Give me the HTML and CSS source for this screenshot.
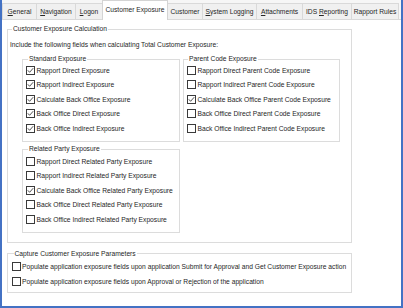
FILE: index.html
```html
<!DOCTYPE html>
<html>
<head>
<meta charset="utf-8">
<link rel="stylesheet" href="styles.css">
</head>
<body>
<div class="frame">
  <div class="tabs">
    <div class="tab w-general"><span><u>G</u>eneral</span></div>
    <div class="tab w-nav"><span><u>N</u>avigation</span></div>
    <div class="tab w-logon"><span><u>L</u>ogon</span></div>
    <div class="tab w-cexp selected"><span>Customer Exposure</span></div>
    <div class="tab w-cust"><span>Customer</span></div>
    <div class="tab w-syslog"><span><u>S</u>ystem Logging</span></div>
    <div class="tab w-attach"><span><u>A</u>ttachments</span></div>
    <div class="tab w-ids"><span>IDS <u>R</u>eporting</span></div>
    <div class="tab w-rules"><span>Rapport Rules</span></div>
  </div>
  <div class="page">
    <fieldset class="group main">
      <legend>Customer Exposure Calculation</legend>
      <div class="intro">Include the following fields when calculating Total Customer Exposure:</div>
      <div class="cols">
        <fieldset class="group sub std">
          <legend>Standard Exposure</legend>
          <div class="row"><span class="cb checked"><svg viewBox="0 0 9 9"><polyline points="1.8,4.3 3.6,6.3 7.2,2.2"/></svg></span><span>Rapport Direct Exposure</span></div>
          <div class="row"><span class="cb checked"><svg viewBox="0 0 9 9"><polyline points="1.8,4.3 3.6,6.3 7.2,2.2"/></svg></span><span>Rapport Indirect Exposure</span></div>
          <div class="row"><span class="cb checked"><svg viewBox="0 0 9 9"><polyline points="1.8,4.3 3.6,6.3 7.2,2.2"/></svg></span><span>Calculate Back Office Exposure</span></div>
          <div class="row"><span class="cb checked"><svg viewBox="0 0 9 9"><polyline points="1.8,4.3 3.6,6.3 7.2,2.2"/></svg></span><span>Back Office Direct Exposure</span></div>
          <div class="row"><span class="cb checked"><svg viewBox="0 0 9 9"><polyline points="1.8,4.3 3.6,6.3 7.2,2.2"/></svg></span><span>Back Office Indirect Exposure</span></div>
        </fieldset>
        <fieldset class="group sub parent">
          <legend>Parent Code Exposure</legend>
          <div class="row"><span class="cb"></span><span>Rapport Direct Parent Code Exposure</span></div>
          <div class="row"><span class="cb"></span><span>Rapport Indirect Parent Code Exposure</span></div>
          <div class="row"><span class="cb checked"><svg viewBox="0 0 9 9"><polyline points="1.8,4.3 3.6,6.3 7.2,2.2"/></svg></span><span>Calculate Back Office Parent Code Exposure</span></div>
          <div class="row"><span class="cb"></span><span>Back Office Direct Parent Code Exposure</span></div>
          <div class="row"><span class="cb"></span><span>Back Office Indirect Parent Code Exposure</span></div>
        </fieldset>
      </div>
      <fieldset class="group sub related">
        <legend>Related Party Exposure</legend>
        <div class="row"><span class="cb"></span><span>Rapport Direct Related Party Exposure</span></div>
        <div class="row"><span class="cb"></span><span>Rapport Indirect Related Party Exposure</span></div>
        <div class="row"><span class="cb checked"><svg viewBox="0 0 9 9"><polyline points="1.8,4.3 3.6,6.3 7.2,2.2"/></svg></span><span>Calculate Back Office Related Party Exposure</span></div>
        <div class="row"><span class="cb"></span><span>Back Office Direct Related Party Exposure</span></div>
        <div class="row"><span class="cb"></span><span>Back Office Indirect Related Party Exposure</span></div>
      </fieldset>
    </fieldset>
    <fieldset class="group capture">
      <legend>Capture Customer Exposure Parameters</legend>
      <div class="row wide"><span class="cb"></span><span>Populate application exposure fields upon application Submit for Approval and Get Customer Exposure action</span></div>
      <div class="row wide"><span class="cb"></span><span>Populate application exposure fields upon Approval or Rejection of the application</span></div>
    </fieldset>
  </div>
</div>
</body>
</html>
```

FILE: styles.css
```css
html, body {
  margin: 0;
  padding: 0;
}
body {
  width: 403px;
  height: 308px;
  overflow: hidden;
  font-family: "Liberation Sans", Arial, sans-serif;
  font-size: 6.7px;
  color: #262626;
  background: #fff;
}
.frame {
  box-sizing: border-box;
  width: 403px;
  height: 308px;
  border: 2px solid #4472c4;
  border-top: 0;
  display: flex;
  flex-direction: column;
  background: #fff;
}
.tabs {
  height: 19px;
  flex: none;
  display: flex;
  align-items: flex-end;
  background: #f6f6f6;
}
.tab {
  box-sizing: border-box;
  height: 16px;
  margin-right: -1px;
  border: 1px solid #d9d9d9;
  border-bottom: 0;
  background: #f0f0f0;
  display: flex;
  align-items: center;
  justify-content: center;
  white-space: nowrap;
}
.tab.selected {
  position: relative;
  height: 20px;
  margin-bottom: -1px;
  padding-bottom: 3px;
  background: #fff;
  border-color: #d4d4d4;
}
.w-general { width: 35px; }
.w-nav { width: 40px; }
.w-logon { width: 28px; }
.w-cexp { width: 66px; }
.w-cust { width: 36px; }
.w-syslog { width: 55px; }
.w-attach { width: 47px; }
.w-ids { width: 50px; }
.w-rules { width: 48px; }

.page {
  flex: 1;
  background: #fff;
  border-top: 1px solid #d9d9d9;
  padding: 5px 0 0 5px;
}
.group {
  box-sizing: border-box;
  margin: 0;
  padding: 0;
  min-width: 0;
  border: 1px solid #dcdcdc;
}
.group legend {
  padding: 0 1px;
  margin-left: 2px;
  line-height: 8px;
  white-space: nowrap;
}
.main {
  width: 345px;
  padding: 6.5px 0 9.5px 2px;
}
.intro {
  height: 10px;
  line-height: 10px;
  white-space: nowrap;
}
.cols {
  display: flex;
  gap: 3px;
  margin: 5.5px 0 0 12px;
}
.sub {
  padding: 0 0 5px 3px;
}
.sub legend {
  margin-left: 2px;
}
.std { width: 158px; }
.parent { width: 157px; }
.parent legend { margin-left: 1px; }
.related {
  width: 158px;
  margin: 3.5px 0 0 12px;
  padding-top: 0.75px;
  padding-bottom: 5.5px;
}
.row {
  height: 14.5px;
  display: flex;
  align-items: center;
  gap: 1.5px;
  white-space: nowrap;
}
.capture {
  width: 345px;
  margin-top: 6.5px;
  padding: 1.5px 0 2.5px 3.5px;
}
.row.wide {
  height: 15px;
}
.cb {
  box-sizing: border-box;
  width: 9px;
  height: 9px;
  flex: none;
  border: 1px solid #3a3a3a;
  background: #fff;
  position: relative;
}
.cb svg {
  position: absolute;
  left: -1px;
  top: -1px;
  width: 9px;
  height: 9px;
  fill: none;
  stroke: #333;
  stroke-width: 0.85;
}
```
